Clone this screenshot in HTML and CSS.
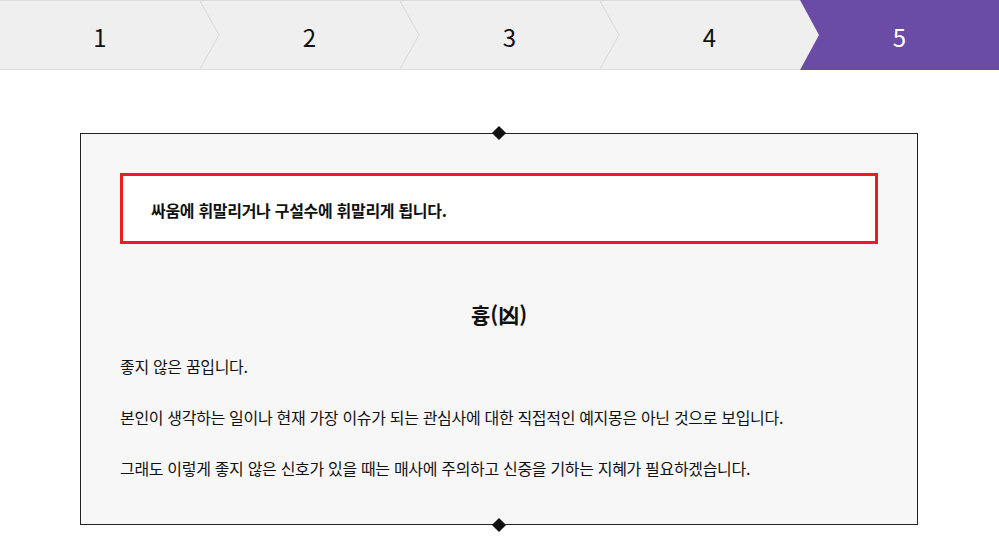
FILE: index.html
```html
<!DOCTYPE html>
<html lang="ko">
<head>
<meta charset="utf-8">
<title>꿈해몽</title>
<link rel="stylesheet" href="styles.css">
</head>
<body>
<nav class="steps">
  <div class="step"><span class="num">1</span></div>
  <div class="step notched"><svg class="sep" viewBox="0 0 20 68" preserveAspectRatio="none"><polyline points="0,0 19,34 0,68"/></svg><span class="num">2</span></div>
  <div class="step notched"><svg class="sep" viewBox="0 0 20 68" preserveAspectRatio="none"><polyline points="0,0 19,34 0,68"/></svg><span class="num">3</span></div>
  <div class="step notched"><svg class="sep" viewBox="0 0 20 68" preserveAspectRatio="none"><polyline points="0,0 19,34 0,68"/></svg><span class="num">4</span></div>
  <div class="step notched active"><span class="num">5</span></div>
</nav>
<main class="panel">
  <div class="summary">싸움에 휘말리거나 구설수에 휘말리게 됩니다.</div>
  <h2 class="verdict">흉(凶)</h2>
  <p class="desc">좋지 않은 꿈입니다.</p>
  <p class="desc">본인이 생각하는 일이나 현재 가장 이슈가 되는 관심사에 대한 직접적인 예지몽은 아닌 것으로 보입니다.</p>
  <p class="desc">그래도 이렇게 좋지 않은 신호가 있을 때는 매사에 주의하고 신중을 기하는 지혜가 필요하겠습니다.</p>
</main>
</body>
</html>
```
FILE: styles.css
```css
html, body {
  margin: 0;
  padding: 0;
  background: #ffffff;
}
body {
  font-family: "Noto Sans CJK KR", "Noto Sans", sans-serif;
  color: #111111;
}
.steps {
  display: flex;
  height: 70px;
  box-sizing: border-box;
  background: #efefef;
  border-top: 1px solid #dddddd;
  border-bottom: 1px solid #dddddd;
}
.step {
  position: relative;
  width: 200px;
  flex: none;
  box-sizing: border-box;
  display: flex;
  align-items: center;
  justify-content: center;
}
.step.notched {
  padding-left: 19px;
}
.num {
  font-size: 24px;
  line-height: 1;
  padding-top: 3px;
  color: #111111;
}
.sep {
  position: absolute;
  left: 0;
  top: 0;
  width: 20px;
  height: 68px;
  overflow: visible;
}
.sep polyline {
  fill: none;
  stroke: #d9d9d9;
  stroke-width: 1;
}
.step.active {
  flex: 1;
  width: auto;
  margin: -1px 0;
  padding-right: 19px;
  background: #6a4ba6;
  clip-path: polygon(0 0, 100% 0, 100% 100%, 0 100%, 19px 50%);
}
.step.active .num {
  color: #ffffff;
}
.panel {
  position: relative;
  display: block;
  margin: 63px 81px 15px 80px;
  padding: 39px 39px 45px;
  border: 1px solid #222222;
  background: #f7f7f7;
}
.panel::before,
.panel::after {
  content: "";
  position: absolute;
  left: 50%;
  width: 10px;
  height: 10px;
  margin-left: -5px;
  background: #111111;
  transform: rotate(45deg);
}
.panel::before {
  top: -6px;
}
.panel::after {
  bottom: -6px;
}
.summary {
  border: 3px solid #ed1c24;
  background: #ffffff;
  padding: 23px 20px 20px 28px;
  font-size: 16px;
  line-height: 22px;
  font-weight: 700;
  letter-spacing: -0.3px;
  color: #111111;
}
.verdict {
  margin: 55px 0 26px;
  text-align: center;
  font-size: 21px;
  line-height: 30px;
  font-weight: 700;
  color: #111111;
}
.desc {
  margin: 0 0 29px;
  font-size: 16px;
  line-height: 22px;
  letter-spacing: -0.32px;
  color: #111111;
}
.desc:last-child {
  margin-bottom: 0;
}
```
